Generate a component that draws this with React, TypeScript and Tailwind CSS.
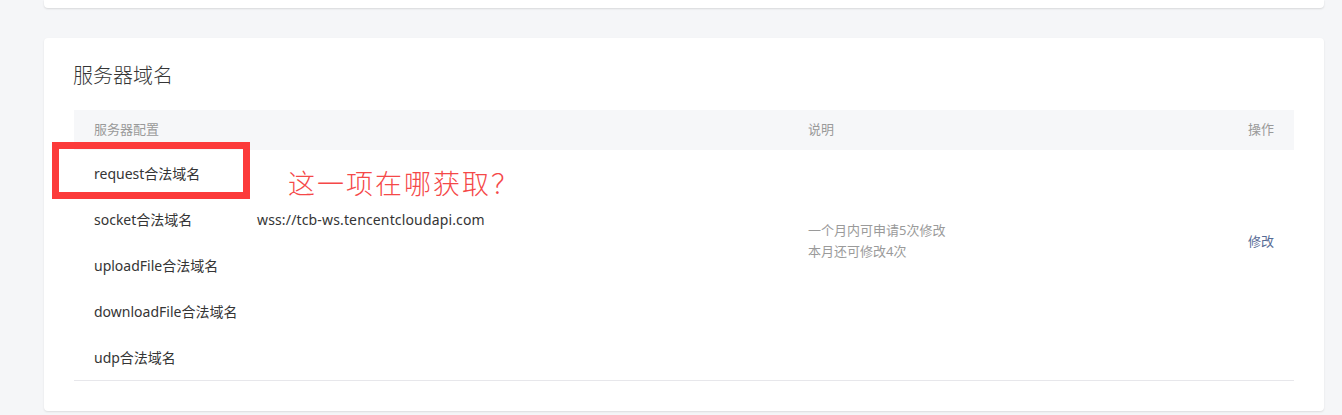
import React from "react";

const font = { fontFamily: '"Noto Sans", "Noto Sans CJK SC", sans-serif' };
const cjk = { fontFamily: '"Noto Sans CJK SC", sans-serif' };

const names = ["request合法域名", "socket合法域名", "uploadFile合法域名", "downloadFile合法域名", "udp合法域名"];
const values = ["", "wss://tcb-ws.tencentcloudapi.com", "", "", ""];

export default function App() {
  return (
    <div className="w-[1342px] h-[415px] bg-[#f5f6f8] overflow-hidden" style={font}>
      <div className="ml-[44px] w-[1280px] h-[8px] bg-white rounded-b-[4px] shadow-[0_1px_2px_rgba(0,0,0,0.12)]" />
      <div className="relative ml-[44px] mt-[30px] w-[1280px] bg-white rounded-[4px] shadow-[0_1px_2px_rgba(0,0,0,0.1)] pt-[61px] px-[30px] pb-[30px]">
        <div className="absolute top-0 left-[29px] h-[61px] flex items-end pb-[9px] text-[20px] text-[#353535] leading-[28px] font-light">
          服务器域名
        </div>
        <div className="mt-[11px] h-[40px] bg-[#f6f7f9] flex items-center text-[13px] text-[#9a9a9a]">
          <div className="w-[734px] pl-[20px]">服务器配置</div>
          <div className="flex-1">说明</div>
          <div className="pr-[20px]">操作</div>
        </div>
        <div className="flex border-b border-[#e7e7eb] text-[14px] text-[#353535]">
          <div className="w-[183px] pl-[20px]">
            {names.map((n) => (
              <div key={n} className="h-[46px] flex items-center">{n}</div>
            ))}
          </div>
          <div className="w-[551px]">
            {values.map((v, i) => (
              <div key={i} className="h-[46px] flex items-center tracking-[0.15px]">{v}</div>
            ))}
          </div>
          <div className="flex-1 pt-[70px] text-[13px] leading-[21px] text-[#9a9a9a]">
            <div>一个月内可申请5次修改</div>
            <div>本月还可修改4次</div>
          </div>
          <div className="pr-[20px] pt-[81px] text-[13px] leading-[21px] text-[#576b95] self-start">修改</div>
        </div>
        <div className="absolute left-[8px] top-[104px] w-[198px] h-[57px] border-[7px] border-[#fc3a3a]" />
        <div
          lang="zh-CN"
          className="absolute left-[244px] top-[128px] text-[27px] leading-[34px] text-[#f54848] font-light tracking-[2px]"
          style={cjk}
        >
          这一项在哪获取？
        </div>
      </div>
    </div>
  );
}
